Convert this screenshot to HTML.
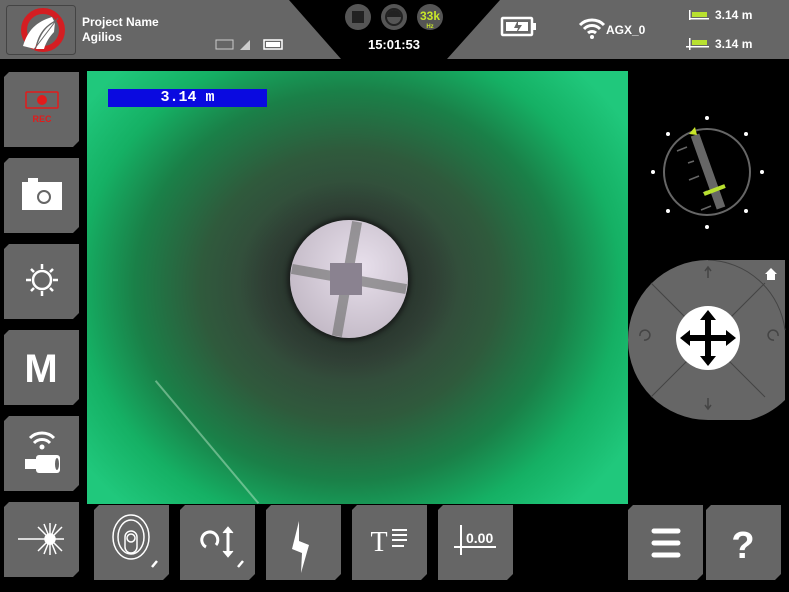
<!DOCTYPE html>
<html><head><meta charset="utf-8"><style>
*{margin:0;padding:0;box-sizing:border-box}
body{width:789px;height:592px;background:#000;position:relative;overflow:hidden;font-family:"Liberation Sans",sans-serif;color:#fff}
.a{position:absolute}
.btn{position:absolute;width:75px;height:75px;background:#666;clip-path:polygon(5px 0,100% 0,100% calc(100% - 6px),calc(100% - 6px) 100%,0 100%,0 5px)}
.btn svg{position:absolute;left:0;top:0}
</style></head><body>
<svg class="a" style="left:0;top:0" width="789" height="60">
<polygon points="0,0 289,0 341,59 0,59" fill="#666"/>
<polygon points="500,0 789,0 789,59 447,59" fill="#666"/>
<rect x="6.5" y="5.5" width="69" height="49" rx="3" fill="#666" stroke="#444"/>
<circle cx="43" cy="30" r="19" fill="none" stroke="#d41e22" stroke-width="6"/>
<path d="M23,46 C28,30 36,22 52,17 L54,21 C42,28 38,36 35,49 Z" fill="#fff"/>
<path d="M36,49 C40,36 44,28 55,22 L54,32 C50,36 46,42 44,49Z" fill="#fff"/>
<path d="M32,52 L58,18" stroke="#666" stroke-width="1"/>
<circle cx="358" cy="17" r="13" fill="#555"/><rect x="352" y="11" width="12" height="12" fill="#222"/>
<circle cx="394" cy="17" r="13" fill="#555"/><circle cx="394" cy="17" r="8" fill="none" stroke="#222" stroke-width="2"/><path d="M387,17 A7,7 0 0 1 401,17Z" fill="#222"/>
<circle cx="430" cy="17" r="13" fill="#555"/>
<text x="430" y="20" font-size="12" font-weight="bold" fill="#c8e62a" text-anchor="middle">33k</text>
<text x="430" y="28" font-size="6" font-weight="bold" fill="#c8e62a" text-anchor="middle">Hz</text>
<text x="394" y="49" font-size="13" font-weight="bold" fill="#fff" text-anchor="middle">15:01:53</text>
<text x="82" y="26" font-size="12" font-weight="bold" fill="#fff">Project Name</text>
<text x="82" y="41" font-size="12" font-weight="bold" fill="#fff">Agilios</text>
<rect x="216" y="40" width="17" height="9" fill="none" stroke="#ccc"/>
<path d="M240,50 L250,40 L250,50Z" fill="#ccc"/>
<rect x="264" y="40" width="18" height="9" fill="none" stroke="#fff" stroke-width="1.5"/><rect x="266" y="42" width="14" height="5" fill="#fff"/>
<rect x="502" y="18" width="30" height="17" rx="1" fill="none" stroke="#fff" stroke-width="2.5"/><rect x="533" y="23" width="3" height="7" fill="#fff"/><rect x="506" y="22" width="22" height="9" fill="#fff"/><path d="M518,20 L514,28 L518,28 L516,34 L522,25 L518,25Z" fill="#666"/>
<path d="M580,25 A17,17 0 0 1 604,25" stroke="#fff" stroke-width="3" fill="none"/><path d="M584,29 A11,11 0 0 1 600,29" stroke="#fff" stroke-width="3" fill="none"/><path d="M588,33 A6,6 0 0 1 596,33" stroke="#fff" stroke-width="3" fill="none"/><circle cx="592" cy="37" r="2" fill="#fff"/>
<text x="606" y="34" font-size="12" font-weight="bold" fill="#fff">AGX_0</text>
<rect x="689" y="10" width="1.5" height="10" fill="#fff"/><rect x="689" y="18" width="20" height="1.5" fill="#fff"/><rect x="692" y="12" width="15" height="5" fill="#b8e030"/>
<text x="715" y="19" font-size="12" font-weight="bold" fill="#fff">3.14 m</text>
<rect x="689" y="38" width="1.5" height="12" fill="#fff"/><rect x="686" y="46" width="23" height="1.5" fill="#fff"/><rect x="692" y="40" width="15" height="5" fill="#b8e030"/>
<text x="715" y="48" font-size="12" font-weight="bold" fill="#fff">3.14 m</text>
</svg>
<div class="a" style="left:87px;top:71px;width:541px;height:433px;overflow:hidden;background:radial-gradient(ellipse 330px 300px at 262px 215px,#2a3a30 0%,#34463a 25%,#2f5a3c 45%,#1a8048 65%,#15b064 82%,#20c87c 100%)">
<div class="a" style="left:0;top:0;width:541px;height:433px;background:radial-gradient(ellipse 110px 100px at 262px 210px,rgba(30,36,32,.9),rgba(30,36,32,0) 100%)"></div>
<div class="a" style="left:203px;top:149px;width:118px;height:118px;border-radius:50%;background:radial-gradient(circle at 60% 40%,#e8e0ec,#b8aebb);box-shadow:0 0 4px 3px #1a1e1c"></div>
<div class="a" style="left:255px;top:150px;width:10px;height:116px;background:#777;opacity:.7;transform:rotate(10deg)"></div>
<div class="a" style="left:204px;top:203px;width:116px;height:10px;background:#777;opacity:.7;transform:rotate(10deg)"></div>
<div class="a" style="left:243px;top:192px;width:32px;height:32px;background:#8a8290"></div>
<div class="a" style="left:40px;top:370px;width:160px;height:2px;background:rgba(200,240,210,.45);transform:rotate(50deg)"></div>
<div class="a" style="left:21px;top:18px;width:159px;height:18px;background:#0a0ae0"></div>
<div class="a" style="left:21px;top:18px;width:159px;height:18px;text-align:center;font:bold 15px/18px 'Liberation Mono',monospace;color:#fff">3.14 m</div>
</div>
<div class="btn" style="left:4px;top:72px"><svg width="75" height="75"><rect x="22" y="20" width="32" height="16" rx="1" fill="none" stroke="#e21b1b" stroke-width="1.5"/><circle cx="38" cy="28" r="5" fill="#e21b1b"/><text x="38" y="50" font-size="9" font-weight="bold" fill="#e21b1b" text-anchor="middle">REC</text></svg></div>
<div class="btn" style="left:4px;top:158px"><svg width="75" height="75"><rect x="18" y="24" width="40" height="28" fill="#fff"/><rect x="24" y="20" width="10" height="5" fill="#fff"/><circle cx="40" cy="39" r="6" fill="#fff" stroke="#666" stroke-width="2"/></svg></div>
<div class="btn" style="left:4px;top:244px"><svg width="75" height="75" stroke="#fff" stroke-width="2.5" fill="none"><circle cx="38" cy="36" r="9"/><path d="M38,20v5M38,47v5M22,36h5M49,36h5M27,25l3,3M46,44l3,3M27,47l3,-3M46,28l3,-3"/></svg></div>
<div class="btn" style="left:4px;top:330px"><svg width="75" height="75"><text x="37" y="52" font-size="40" font-weight="bold" fill="#fff" text-anchor="middle">M</text></svg></div>
<div class="btn" style="left:4px;top:416px"><svg width="75" height="75"><path d="M26,22 A17,17 0 0 1 50,22M30,27 A11,11 0 0 1 46,27" stroke="#fff" stroke-width="3" fill="none"/><circle cx="38" cy="31" r="2.5" fill="#fff"/><rect x="21" y="43" width="12" height="10" fill="#fff"/><rect x="32" y="39" width="24" height="18" rx="3" fill="#fff"/><ellipse cx="53" cy="48" rx="2" ry="6" fill="#666"/></svg></div>
<div class="btn" style="left:4px;top:502px"><svg width="75" height="75" stroke="#fff" stroke-width="1.5"><path d="M14,37H60M46,21L46,53M34,25L58,49M34,49L58,25M40,22L52,52M40,52L52,22"/><circle cx="46" cy="37" r="5" fill="#fff"/></svg></div>
<div class="btn" style="left:94px;top:505px"><svg width="75" height="75" fill="none" stroke="#fff" stroke-width="1.5"><ellipse cx="37" cy="32" rx="18" ry="22"/><ellipse cx="37" cy="32" rx="13" ry="17"/><rect x="31" y="26" width="12" height="22" rx="6"/><circle cx="37" cy="33" r="4"/><path d="M58,62l5,-6" stroke-width="2.5"/></svg></div>
<div class="btn" style="left:180px;top:505px"><svg width="75" height="75" fill="none" stroke="#fff" stroke-width="3"><path d="M26,42 A8,8 0 1 1 36,40"/><path d="M48,24V50"/><path d="M43,28l5,-6l5,6M43,46l5,6l5,-6" fill="#fff" stroke-width="1"/><path d="M58,62l5,-6" stroke-width="2.5"/></svg></div>
<div class="btn" style="left:266px;top:505px"><svg width="75" height="75"><path d="M33,16 L26,44 L36,48 L35,68 L43,40 L33,36 Z" fill="#fff"/></svg></div>
<div class="btn" style="left:352px;top:505px"><svg width="75" height="75"><text x="27" y="46" font-size="28" font-family="Liberation Serif" fill="#fff" text-anchor="middle">T</text><path d="M40,25h15M40,30h15M40,35h15M40,41h12" stroke="#fff" stroke-width="2"/></svg></div>
<div class="btn" style="left:438px;top:505px"><svg width="75" height="75"><path d="M23,20V50M16,42H58" stroke="#fff" stroke-width="2"/><text x="28" y="38" font-size="14" font-weight="bold" fill="#fff">0.00</text></svg></div>
<div class="btn" style="left:628px;top:505px"><svg width="75" height="75" stroke="#fff" stroke-width="5" stroke-linecap="round"><path d="M26,26H50M26,38H50M26,50H50"/></svg></div>
<div class="btn" style="left:706px;top:505px"><svg width="75" height="75"><text x="37" y="53" font-size="38" font-weight="bold" fill="#fff" text-anchor="middle">?</text></svg></div>
<svg class="a" style="left:625px;top:110px" width="164" height="160">
<g fill="#fff"><circle cx="82" cy="8" r="2"/><circle cx="43" cy="24" r="2"/><circle cx="121" cy="24" r="2"/><circle cx="28" cy="62" r="2"/><circle cx="137" cy="62" r="2"/><circle cx="43" cy="101" r="2"/><circle cx="121" cy="101" r="2"/><circle cx="82" cy="117" r="2"/></g>
<circle cx="82" cy="62" r="43" fill="none" stroke="#666" stroke-width="2"/>
<line x1="70" y1="25" x2="96" y2="98" stroke="#666" stroke-width="9"/>
<g stroke="#666" stroke-width="1.5"><path d="M52,41l10,-4M63,53l6,-2M64,70l10,-4M78,83l4,-2M76,100l10,-4"/></g>
<line x1="79" y1="84" x2="100" y2="76" stroke="#b8e030" stroke-width="4"/>
<path d="M64,24 L70,17 L72,25Z" fill="#c8e62a"/>
</svg>
<svg class="a" style="left:628px;top:260px" width="161" height="160">
<path d="M80,0 H157 V140 A80,80 0 0 1 80,160 A80,80 0 0 1 0,80 A80,80 0 0 1 80,0Z" fill="#666"/>
<path d="M80,0 A80,80 0 0 1 157,70" fill="none" stroke="#444"/>
<g stroke="#444"><path d="M23,23L137,137M23,137L137,23"/></g>
<circle cx="80" cy="78" r="32" fill="#fff"/>
<path d="M80,50 L88,60 H83 V75 H98 V70 L108,78 L98,86 V81 H83 V96 H88 L80,106 L72,96 H77 V81 H62 V86 L52,78 L62,70 V75 H77 V60 H72Z" fill="#000"/>
<path d="M80,8v10M77,11l3,-4l3,4M80,138v10M77,145l3,4l3,-4" stroke="#444" stroke-width="1.5" fill="none"/>
<path d="M16,80 A5,5 0 1 0 12,76M146,80 A5,5 0 1 1 150,76" stroke="#444" stroke-width="1.5" fill="none"/>
<path d="M137,14 L143,8 L149,14 H147 V20 H139 V14Z" fill="#fff"/>
</svg>
</body></html>
